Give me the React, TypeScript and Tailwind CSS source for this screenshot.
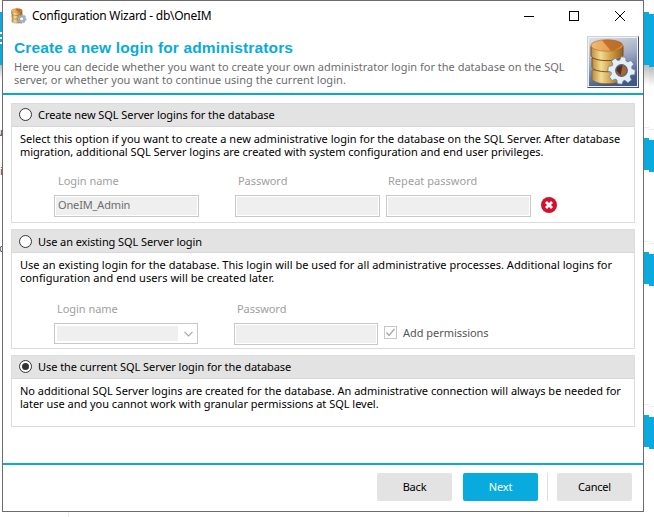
import React from "react";

function DatabaseGear({ className, framed = false }: { className: string; framed?: boolean }) {
  const teeth = [0, 45, 90, 135, 180, 225, 270, 315];
  const metal = framed ? "#e5edf7" : "#a9b4c2";
  const edge = framed ? "#657da8" : "#5b6673";
  return (
    <svg className={className} viewBox={framed ? "0 0 52 52" : "3 2 47 48"}>
      <defs>
        <linearGradient id="frame" x1="0" y1="0" x2="0.3" y2="1">
          <stop offset="0" stopColor="#e0e2e6" />
          <stop offset="0.5" stopColor="#a3adc4" />
          <stop offset="1" stopColor="#42588c" />
        </linearGradient>
        <linearGradient id="gold" x1="0" x2="1">
          <stop offset="0" stopColor="#bd8a3a" />
          <stop offset="0.3" stopColor="#f3dc94" />
          <stop offset="0.65" stopColor="#cb9a42" />
          <stop offset="1" stopColor="#93601f" />
        </linearGradient>
        <linearGradient id="lid" x1="0" x2="1">
          <stop offset="0" stopColor="#f3b970" />
          <stop offset="1" stopColor="#dc8d3d" />
        </linearGradient>
      </defs>
      {framed && (
        <>
          <rect width="52" height="52" fill="#3f5384" />
          <path d="M0 52V0H52L51 1H1V51Z" fill="#cbd2df" />
          <rect x="1.5" y="1.5" width="49" height="49" fill="url(#frame)" stroke="#eef1f6" />
        </>
      )}
      <path d="M5 34v8.500c0 7 30 7 30 0V34z" fill="url(#gold)" stroke="#795020" strokeWidth=".6" />
      <path d="M5 22v8.500c0 7 30 7 30 0V22z" fill="url(#gold)" stroke="#795020" strokeWidth="1" />
      <path d="M4 10v9c0 7.500 32 7.500 32 0v-9z" fill="url(#gold)" stroke="#795020" strokeWidth="1" />
      <ellipse cx="20" cy="9.5" rx="16" ry="5.800" fill="url(#lid)" stroke="#a96925" strokeWidth=".6" />
      <path d="M15 4.200C22 3 32 4 35 7.500C35 11 29 14 24 15Z" fill="#b3611c" opacity=".75" />
      <g transform="translate(34.5 34.5)">
        {teeth.map((angle) => (
          <path key={angle} transform={`rotate(${angle + 8})`} d="M-3.700-8L-2.300-13.600H2.300L3.700-8Z" fill={metal} stroke={edge} strokeWidth=".7" />
        ))}
        <circle r="8" fill="none" stroke={metal} strokeWidth="4.5" />
        <circle r="5.800" fill={framed ? "#a7652b" : "#fff"} stroke={framed ? "#4d638b" : edge} strokeWidth="1.2" />
        {framed && <path d="M-5 0A5 5 0 0 1 1-5L-1 5Z" fill="#4e302a" />}
      </g>
    </svg>
  );
}

function Line({ children, className }: { children: React.ReactNode; className: string }) {
  return <span className={`block h-[13px] whitespace-nowrap ${className}`}>{children}</span>;
}

function Radio({ checked = false }: { checked?: boolean }) {
  return (
    <span className="flex size-[13px] shrink-0 items-center justify-center rounded-full border border-[#333] bg-white">
      {checked && <span className="size-[7px] rounded-full bg-[#333]" />}
    </span>
  );
}

function Section({ title, tracking, checked, height, inset, children }: { title: string; tracking: string; checked?: boolean; height: string; inset: string; children: React.ReactNode }) {
  return (
    <section className={`border border-[#dcdcdc] ${height}`}>
      <div className={`flex h-[23px] items-start gap-[6px] border-b border-[#d7d7d7] bg-[#e3e3e3] pl-[7px] ${inset}`}>
        <Radio checked={checked} />
        <span className={`whitespace-nowrap leading-[13px] ${tracking}`}>{title}</span>
      </div>
      {children}
    </section>
  );
}

function Field({ label, value, className, labelClass }: { label: string; value?: string; className: string; labelClass: string }) {
  return (
    <label className={`block ${className}`}>
      <span className={`block h-[21px] whitespace-nowrap leading-[13px] text-[#a0a0a0] ${labelClass}`}>{label}</span>
      <span className="block h-[22px] border border-[#c8c8c8] bg-white p-px">
        <span className="block h-[18px] bg-[#efefef] pl-[2px] leading-[16px] tracking-[-0.15px] text-[#6d6d6d]">{value}</span>
      </span>
    </label>
  );
}

function Column({ offset, width }: { offset: string; width: string }) {
  return (
    <div className={`${offset} ${width} shrink-0`}>
      <div className="h-[53px] bg-[#09aadd]" />
      <div className="h-[20px] bg-linear-to-b from-[#bdbdbd] to-white" />
      <div className="mt-[42px] h-px bg-[#ececec]" />
      <div className="mt-[10px] h-[32px] bg-[#09aadd]" />
      <div className="mt-[71px] h-px bg-[#ececec]" />
      <div className="mt-[10px] h-[32px] bg-[#09aadd]" />
      <div className="mt-[120px] h-px bg-[#ececec]" />
      <div className="mt-[10px] h-[32px] bg-[#09aadd]" />
    </div>
  );
}

export default function App() {
  return (
    <div className="flex h-[517px] w-[654px] overflow-hidden bg-white font-['Noto_Sans',sans-serif] text-[11px] text-black">
      <div className="w-[2px] shrink-0 overflow-hidden pt-[12px] text-[11px] leading-[13px] text-[#444]">
        <div className="h-[53px] bg-[#09aadd] pt-[20px]">
          <div className="h-[2px] bg-white" />
          <div className="mt-[3px] h-[2px] bg-white" />
          <div className="mt-[3px] h-[2px] bg-white" />
        </div>
        <div className="h-[15px] bg-linear-to-b from-[#bdbdbd] to-white" />
        <div className="mt-[45px] -ml-[4px] w-[8px]">u</div>
        <div className="mt-[26px]">i</div>
        <div className="mt-[64px] -ml-px">c</div>
      </div>
      <div className="flex w-[642px] shrink-0 flex-col">
        <main className="flex h-[512px] flex-col border border-[#6c6c6c] bg-white">
          <header className="flex h-[92px] flex-col">
            <div className="flex h-[30px] items-center pl-[8px] pr-[17px]">
              <DatabaseGear className="size-[16px]" />
              <span className="ml-[5px] whitespace-nowrap text-[12px] leading-[18px] tracking-[-0.26px]">Configuration Wizard - db\OneIM</span>
              <svg className="ml-auto h-[12px] w-[102px]" viewBox="0 0 102 12" fill="none" stroke="#000" shapeRendering="crispEdges">
                <path d="M0 6.5h10M45.5 1.5h9v9h-9z" />
                <path d="M91 1l10 10M101 1L91 11" shapeRendering="auto" />
              </svg>
            </div>
            <div className="flex justify-between pl-[11px] pr-[4px]">
              <div className="pt-[8px]">
                <h1 className="h-[21px] whitespace-nowrap font-['Liberation_Sans',sans-serif] text-[15.5px] leading-[18px] font-bold tracking-[0.14px] text-[#09aadd]">Create a new login for administrators</h1>
                <p className="leading-[13px] text-[#6d6d6d]">
                  <Line className="tracking-[0px]">Here you can decide whether you want to create your own administrator login for the database on the SQL</Line>
                  <Line className="tracking-[0.04px]">server, or whether you want to continue using the current login.</Line>
                </p>
              </div>
              <DatabaseGear framed className="mt-[5px] size-[52px] shrink-0" />
            </div>
          </header>
          <div className="h-[2px] shrink-0 bg-[#09aacd]" />
          <div className="flex h-[368px] shrink-0 flex-col gap-[6px] px-[8px] pt-[8px]">
            <Section title="Create new SQL Server logins for the database" tracking="tracking-[-0.06px]" height="h-[120px]" inset="pt-[4px]">
              <p className="pl-[8px] pt-[5px] leading-[13px]">
                <Line className="tracking-[0.007px]">Select this option if you want to create a new administrative login for the database on the SQL Server. After database</Line>
                <Line className="tracking-[-0.03px]">migration, additional SQL Server logins are created with system configuration and end user privileges.</Line>
              </p>
              <div className="mt-[16px] flex pl-[42px]">
                <Field label="Login name" value="OneIM_Admin" className="w-[145px]" labelClass="pl-[4px] tracking-[-0.05px]" />
                <Field label="Password" className="ml-[36px] w-[145px]" labelClass="pl-[3px] tracking-[-0.05px]" />
                <Field label="Repeat password" className="ml-[6px] w-[145px]" labelClass="pl-[2px] tracking-[0.03px]" />
                <svg className="ml-[10px] mt-[23px] size-[16px]" viewBox="0 0 16 16">
                  <circle cx="8" cy="8" r="8" fill="#d0122d" />
                  <path d="M5 5l6 6M11 5l-6 6" stroke="#fff" strokeWidth="2.8" />
                </svg>
              </div>
            </Section>
            <Section title="Use an existing SQL Server login" tracking="tracking-[-0.08px]" height="h-[120px]" inset="pt-[5px]">
              <p className="pl-[8px] pt-[5px] leading-[13px]">
                <Line className="tracking-[0.03px]">Use an existing login for the database. This login will be used for all administrative processes. Additional logins for</Line>
                <Line className="tracking-[0.06px]">configuration and end users will be created later.</Line>
              </p>
              <div className="mt-[18px] flex pl-[42px]">
                <div className="w-[144px]">
                  <span className="block h-[21px] pl-[3px] leading-[13px] tracking-[-0.05px] text-[#a0a0a0]">Login name</span>
                  <div className="flex h-[21px] items-center justify-between border border-[#c8c8c8] pl-[2px] pr-[4px]">
                    <span className="h-[15px] w-[121px] bg-[#efefef]" />
                    <svg className="h-[6px] w-[9px]" viewBox="0 0 9 6" fill="none" stroke="#a5a5a5" strokeWidth="1.2">
                      <path d="M.5.8L4.5 4.8L8.5.8" />
                    </svg>
                  </div>
                </div>
                <Field label="Password" className="ml-[36px] w-[144px]" labelClass="pl-[3px] tracking-[-0.05px]" />
                <div className="ml-[6px] mt-[24px] flex h-[17px] items-start gap-[6px]">
                  <svg className="size-[13px]" viewBox="0 0 13 13" fill="none">
                    <rect x=".5" y=".5" width="12" height="12" stroke="#c8c8c8" />
                    <path d="M2.5 6.5L5 9.5L10.5 3" stroke="#a8a8a8" strokeWidth="1.3" />
                  </svg>
                  <span className="whitespace-nowrap leading-[13px] tracking-[-0.04px] text-[#555]">Add permissions</span>
                </div>
              </div>
            </Section>
            <Section title="Use the current SQL Server login for the database" tracking="tracking-[-0.06px]" checked height="h-[72px]" inset="pt-[4px]">
              <p className="pl-[8px] pt-[5px] leading-[13px]">
                <Line className="tracking-[-0.01px]">No additional SQL Server logins are created for the database. An administrative connection will always be needed for</Line>
                <Line className="tracking-[-0.02px]">later use and you cannot work with granular permissions at SQL level.</Line>
              </p>
            </Section>
          </div>
          <footer className="flex h-[48px] justify-end border-t-2 border-[#09aadd] pr-[11px] pt-[8px] tracking-[-0.2px]">
            <button className="h-[28px] w-[75px] rounded-[2px] bg-[#e3e3e3]">Back</button>
            <button className="ml-[11px] h-[28px] w-[75px] rounded-[2px] bg-[#09aadd] text-white">Next</button>
            <div className="ml-[9px] h-[28px] w-px bg-[#dedede]" />
            <button className="ml-[9px] h-[28px] w-[75px] rounded-[2px] bg-[#e3e3e3]">Cancel</button>
          </footer>
        </main>
        <div className="ml-[66px] h-[5px] w-px bg-[#ececec]" />
      </div>
      <div className="flex w-[10px] shrink-0">
        <Column offset="pt-[12px]" width="w-[5px]" />
        <Column offset="pt-[14px]" width="w-[5px]" />
      </div>
    </div>
  );
}
